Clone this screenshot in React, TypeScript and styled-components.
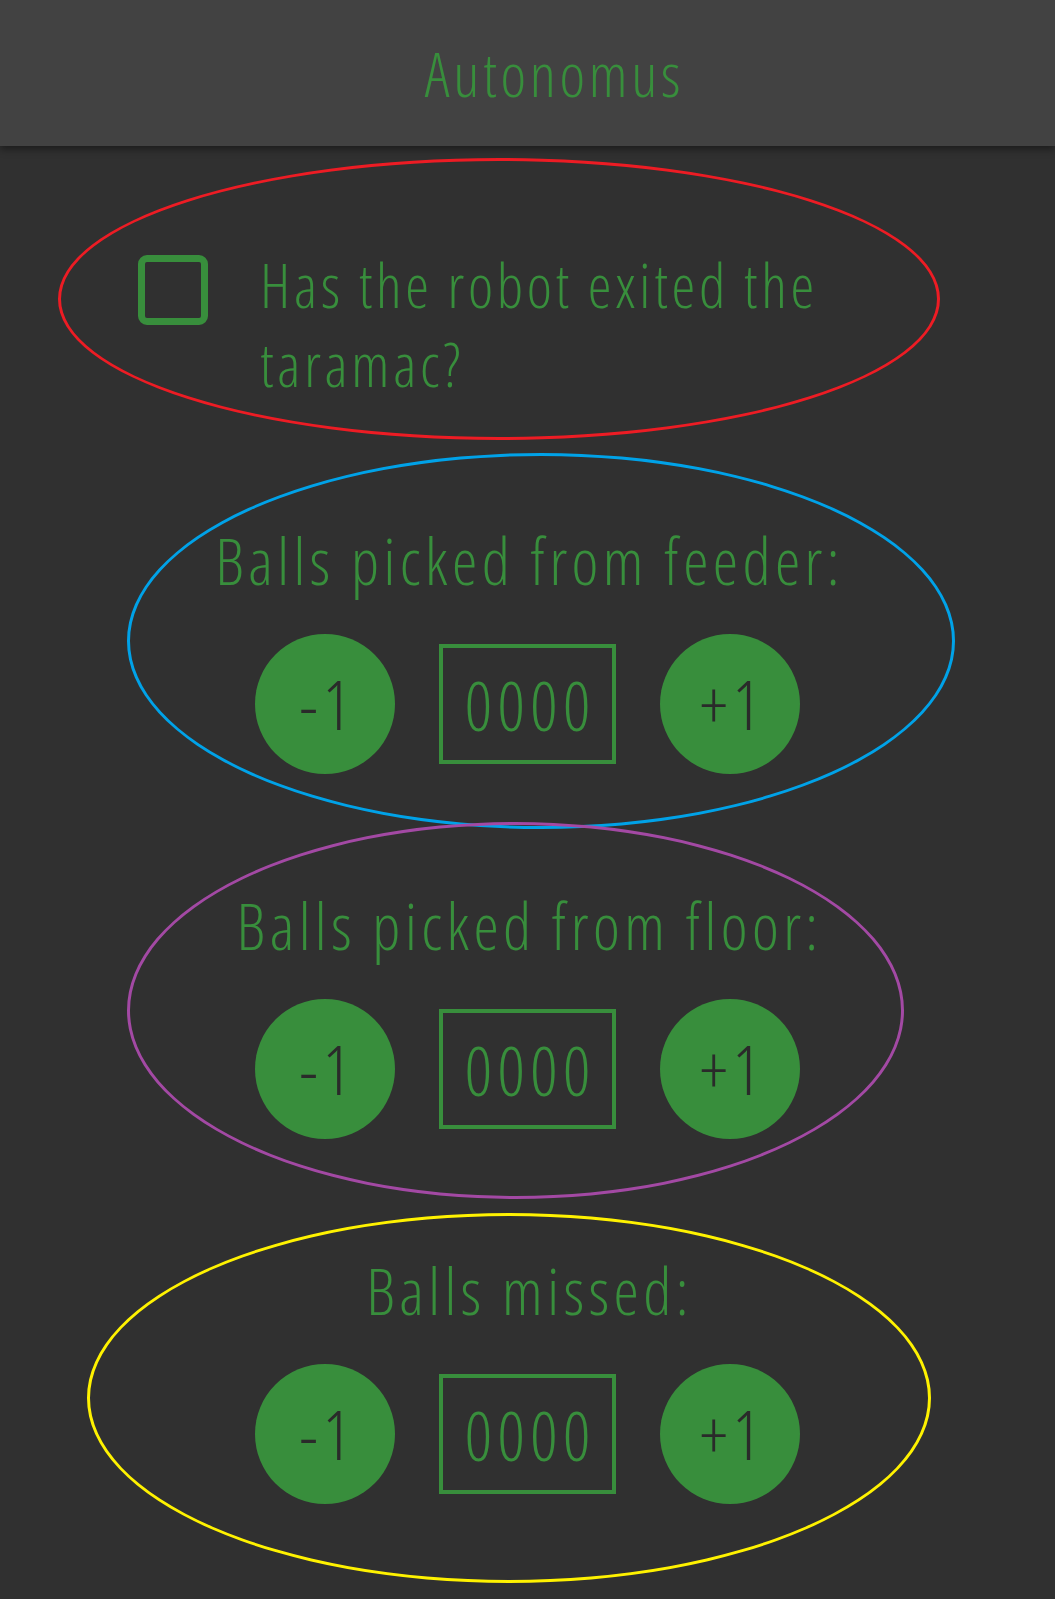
import React from "react";
import styled, { createGlobalStyle } from "styled-components";

const GREEN = "#388e3c";
const FONT = `"Open Sans", "DejaVu Sans Condensed", sans-serif`;
const STRETCH = "75%";

const GlobalStyle = createGlobalStyle`
  html, body {
    margin: 0;
    padding: 0;
    background: #303030;
  }
  body {
    font-family: ${FONT};
    font-stretch: ${STRETCH};
    font-weight: 300;
    color: ${GREEN};
  }
`;

const Page = styled.div`
  min-height: 1599px;
  background: #303030;
  display: flex;
  flex-direction: column;
  overflow: hidden;
`;

const Header = styled.header`
  height: 146px;
  background: #424242;
  box-shadow: 0 3px 8px rgba(0, 0, 0, 0.45);
  display: flex;
  align-items: center;
  justify-content: center;
  position: relative;
  z-index: 1;
`;

const Title = styled.h1`
  margin: 0;
  padding-left: 54px;
  font-family: ${FONT};
  font-stretch: ${STRETCH};
  font-weight: 300;
  font-size: 61px;
  line-height: 1;
  letter-spacing: 3.7px;
  color: ${GREEN};
`;

const Content = styled.main`
  display: flex;
  flex-direction: column;
  padding-top: 100px;
`;

const CheckRow = styled.label`
  position: relative;
  display: flex;
  align-items: flex-start;
  gap: 52px;
  padding-left: 138px;
  margin-bottom: 119px;
`;

const Box = styled.span`
  flex: none;
  width: 70px;
  height: 70px;
  margin-top: 9px;
  box-sizing: border-box;
  border: 7px solid ${GREEN};
  border-radius: 9px;
`;

const CheckText = styled.span`
  width: 640px;
  font-size: 60px;
  line-height: 79px;
  letter-spacing: 3.7px;
  color: ${GREEN};
`;

const Section = styled.section`
  position: relative;
  display: flex;
  flex-direction: column;
  align-items: center;
  gap: 35px;
  margin-bottom: 114px;
`;

const SectionTitle = styled.div`
  padding-left: 4px;
  font-size: 64px;
  line-height: 76px;
  letter-spacing: 4.4px;
  color: ${GREEN};
  white-space: nowrap;
`;

const Counter = styled.div`
  display: flex;
  align-items: center;
  gap: 44px;
`;

const RoundButton = styled.button`
  width: 140px;
  height: 140px;
  border-radius: 50%;
  border: none;
  padding: 0 0 0 5px;
  background: ${GREEN};
  color: #2a2a2a;
  font-family: ${FONT};
  font-stretch: ${STRETCH};
  font-weight: 300;
  font-size: 68px;
  letter-spacing: 5px;
  line-height: 1;
  display: flex;
  align-items: center;
  justify-content: center;
  cursor: pointer;
`;

const Value = styled.div`
  width: 177px;
  height: 120px;
  box-sizing: border-box;
  padding-left: 5px;
  border: 4px solid ${GREEN};
  display: flex;
  align-items: center;
  justify-content: center;
  font-size: 68px;
  letter-spacing: 5px;
  color: ${GREEN};
`;

const Ring = styled.div<{ $color: string; $left: number; $top: number; $w: number; $h: number }>`
  position: absolute;
  left: ${(p) => p.$left}px;
  top: ${(p) => p.$top}px;
  width: ${(p) => p.$w}px;
  height: ${(p) => p.$h}px;
  box-sizing: border-box;
  border: 3px solid ${(p) => p.$color};
  border-radius: 50%;
  pointer-events: none;
`;

type CounterProps = {
  label: string;
  ring: { color: string; left: number; top: number; w: number; h: number };
};

function CounterSection({ label, ring }: CounterProps) {
  return (
    <Section>
      <SectionTitle>{label}</SectionTitle>
      <Counter>
        <RoundButton>-1</RoundButton>
        <Value>0000</Value>
        <RoundButton>+1</RoundButton>
      </Counter>
      <Ring $color={ring.color} $left={ring.left} $top={ring.top} $w={ring.w} $h={ring.h} />
    </Section>
  );
}

export default function App() {
  return (
    <>
      <GlobalStyle />
      <Page>
        <Header>
          <Title>Autonomus</Title>
        </Header>
        <Content>
          <CheckRow>
            <Box />
            <CheckText>Has the robot exited the taramac?</CheckText>
            <Ring $color="#ed1c24" $left={58} $top={-88} $w={882} $h={282} />
          </CheckRow>
          <CounterSection
            label="Balls picked from feeder:"
            ring={{ color: "#00a2e8", left: 127, top: -70, w: 828, h: 376 }}
          />
          <CounterSection
            label="Balls picked from floor:"
            ring={{ color: "#a349a4", left: 127, top: -66, w: 777, h: 377 }}
          />
          <CounterSection
            label="Balls missed:"
            ring={{ color: "#fff200", left: 87, top: -40, w: 844, h: 370 }}
          />
        </Content>
      </Page>
    </>
  );
}
